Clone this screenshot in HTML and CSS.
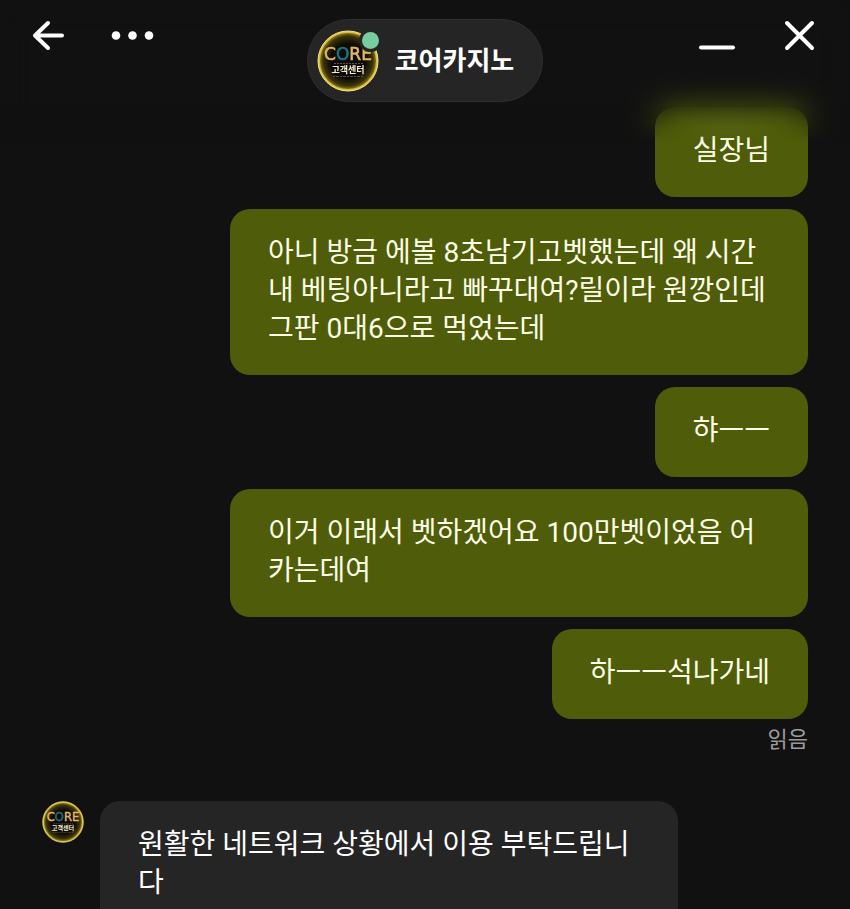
FILE: index.html
```html
<!DOCTYPE html>
<html lang="ko">
<head>
<meta charset="utf-8">
<meta name="viewport" content="width=device-width, initial-scale=1">
<title>코어카지노</title>
<link rel="stylesheet" href="styles.css">
</head>
<body>
<svg class="defs" aria-hidden="true">
  <defs>
    <radialGradient id="glow">
      <stop offset="0.6" stop-color="#0c0b08"/>
      <stop offset="0.85" stop-color="#3a3109"/>
      <stop offset="1" stop-color="#9c881f"/>
    </radialGradient>
    <symbol id="logo" viewBox="0 0 62 62">
      <circle cx="31" cy="31" r="29" fill="url(#glow)" stroke="#d9bf3c" stroke-width="2"/>
      <circle cx="31" cy="31" r="30" fill="none" stroke="#f3e68a" stroke-width="1"/>
      <text class="logo-word" x="31" y="30" text-anchor="middle"><tspan class="gold">C</tspan><tspan class="teal">O</tspan><tspan class="gold">RE</tspan></text>
      <path d="M17 33.500H46" stroke="#91856a" stroke-opacity="0.6" stroke-width="1" stroke-dasharray="2 1"/>
      <text class="logo-sub" x="31" y="43" text-anchor="middle" fill="#f4ead0">고객센터</text>
      <path d="M16 46.500H47" stroke="#8b806a" stroke-opacity="0.6" stroke-width="1" stroke-dasharray="2 1 3 1"/>
    </symbol>
  </defs>
</svg>

<header class="header">
  <div class="actions">
    <button class="icon-button" type="button" aria-label="뒤로">
      <svg width="40" height="40" viewBox="0 0 40 40"><path d="M33 20.500H6M19 8L6 20.500L19 33"/></svg>
    </button>
    <button class="icon-button" type="button" aria-label="메뉴">
      <svg class="dots" width="44" height="40" viewBox="0 0 44 40"><circle cx="6" cy="20.500" r="4.300"/><circle cx="22.500" cy="20.500" r="4.300"/><circle cx="39" cy="20.500" r="4.300"/></svg>
    </button>
  </div>
  <div class="agent">
    <div class="agent-avatar">
      <svg width="62" height="62" aria-hidden="true"><use href="#logo"/></svg>
      <span class="status"></span>
    </div>
    <h1 class="agent-name">코어카지노</h1>
  </div>
  <div class="actions actions-end">
    <button class="icon-button" type="button" aria-label="최소화">
      <svg width="40" height="40" viewBox="0 0 40 40"><path d="M4 32.500H36"/></svg>
    </button>
    <button class="icon-button" type="button" aria-label="닫기">
      <svg width="40" height="40" viewBox="0 0 40 40"><path d="M6 8L31 33M31 8L6 33"/></svg>
    </button>
  </div>
</header>

<main class="chat">
  <div class="sent">
    <p class="bubble">실장님</p>
    <p class="bubble">아니 방금 에볼 8초남기고벳했는데 왜 시간내 베팅아니라고 빠꾸대여?릴이라 원깡인데 그판 0대6으로 먹었는데</p>
    <p class="bubble">햐ㅡㅡ</p>
    <p class="bubble">이거 이래서 벳하겠어요 100만벳이었음 어카는데여</p>
    <p class="bubble">하ㅡㅡ석나가네</p>
  </div>
  <p class="receipt">읽음</p>
  <div class="received">
    <svg class="small-avatar" width="42" height="42" aria-hidden="true"><use href="#logo"/></svg>
    <p class="bubble bubble-agent">원활한 네트워크 상황에서 이용 부탁드립니다</p>
  </div>
</main>
</body>
</html>
```
FILE: styles.css
```css
* {
  box-sizing: border-box;
}

body {
  margin: 0;
  height: 100vh;
  overflow: hidden;
  background: #111111;
  color: #ffffff;
  font-family: Roboto, "Noto Sans CJK KR", sans-serif;
}

h1,
p {
  margin: 0;
}

.defs {
  position: absolute;
  width: 0;
  height: 0;
}

.header {
  position: relative;
  z-index: 1;
  display: grid;
  grid-template-columns: 1fr auto 1fr;
  align-items: start;
  padding: 15px 29px 5px;
}

.header::after {
  content: "";
  position: absolute;
  z-index: -1;
  inset: 0 0 -80px;
  backdrop-filter: blur(16px);
  mask-image: linear-gradient(#000 56%, transparent 76%);
  pointer-events: none;
}

.actions {
  display: flex;
  gap: 41px;
}

.icon-button {
  display: block;
  padding: 0;
  border: 0;
  background: none;
  color: #ffffff;
  cursor: pointer;
}

.icon-button svg {
  display: block;
  fill: none;
  stroke: currentColor;
  stroke-width: 4;
  stroke-linecap: round;
  stroke-linejoin: round;
}

.icon-button .dots {
  fill: currentColor;
  stroke: none;
}

.actions-end {
  justify-content: flex-end;
  gap: 44px;
}

.agent {
  display: flex;
  align-items: center;
  gap: 16px;
  height: 83px;
  margin-top: 4px;
  padding: 0 28px 0 9px;
  border: 1px solid #303030;
  border-radius: 42px;
  background: #252525;
}

.agent-avatar {
  position: relative;
  display: flex;
}

.status {
  position: absolute;
  top: 2px;
  right: 0;
  width: 17px;
  height: 17px;
  border-radius: 50%;
  background: #78cda0;
  box-shadow: 0 0 0 3px #252525;
}

.agent-name {
  font-size: 26px;
  line-height: 38px;
  font-weight: 700;
}

.logo-word {
  font-family: "DejaVu Sans", sans-serif;
  font-size: 17px;
  stroke-width: 0.6px;
}

.gold {
  fill: #e3b662;
  stroke: #e3b662;
}

.teal {
  fill: #1d7383;
  stroke: #1d7383;
}

.logo-sub {
  font-size: 9px;
  font-weight: 700;
}

.chat {
  padding: 0 42px;
}

.sent {
  display: flex;
  flex-direction: column;
  align-items: flex-end;
  gap: 12px;
  color: #fcffe6;
}

.bubble {
  max-width: 578px;
  padding: 25px 38px 27px;
  border-radius: 20px;
  background: #4f5c09;
  font-size: 28px;
  line-height: 38px;
}

.receipt {
  padding-top: 4px;
  color: #9b9b9b;
  font-size: 22px;
  line-height: 34px;
  text-align: right;
}

.received {
  display: flex;
  align-items: flex-start;
  gap: 16px;
  padding-top: 44px;
}

.small-avatar {
  flex: none;
}

.bubble-agent {
  background: #252525;
}
```
